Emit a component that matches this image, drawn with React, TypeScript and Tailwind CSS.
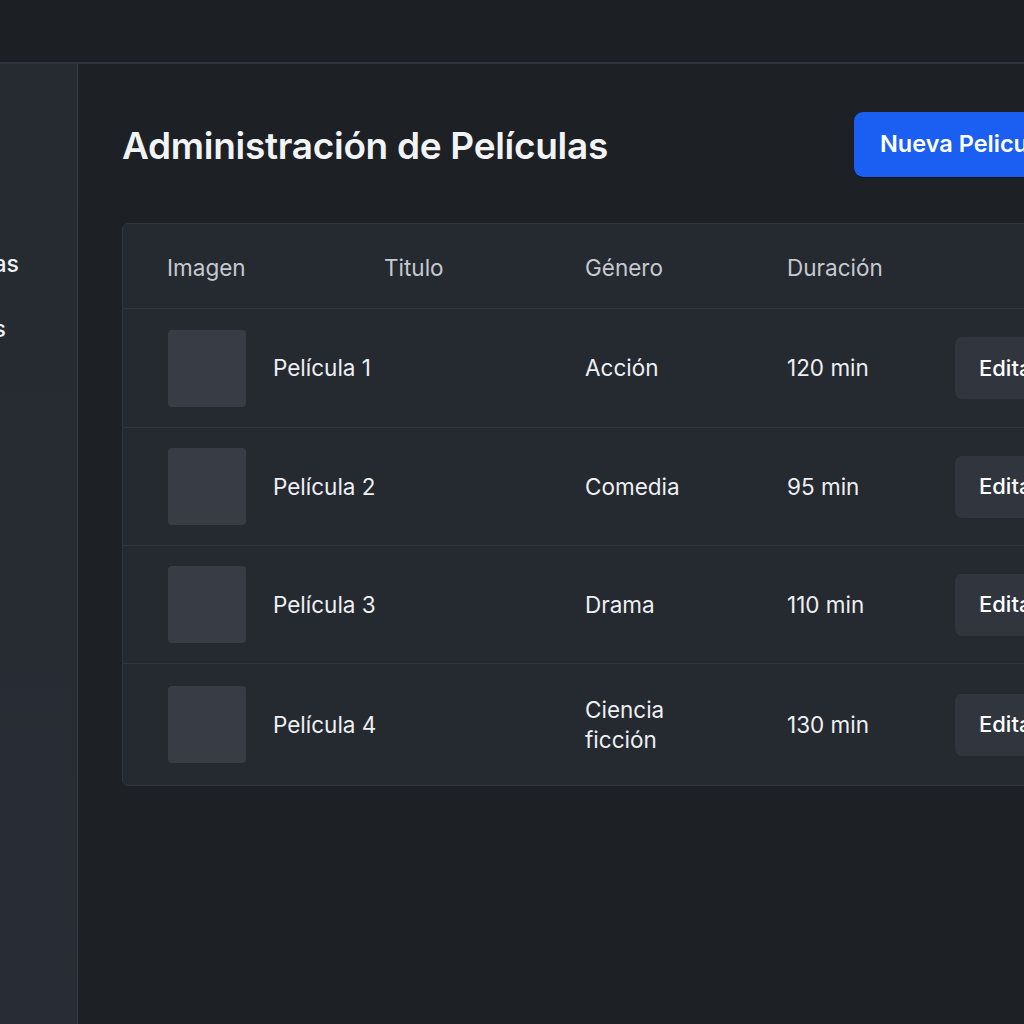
import React from "react";

const movies = [
  { title: "Película 1", genre: "Acción", duration: "120 min", h: "h-[119px]" },
  { title: "Película 2", genre: "Comedia", duration: "95 min", h: "h-[118px]" },
  { title: "Película 3", genre: "Drama", duration: "110 min", h: "h-[118px]" },
  { title: "Película 4", genre: "Ciencia ficción", duration: "130 min", h: "h-[121px]" },
];

const App = () => {
  return (
    <div
      className="w-[1024px] h-[1024px] overflow-hidden bg-[#1d2025] flex flex-col text-[#eef0f3]"
      style={{ fontFamily: "Inter, 'Noto Sans', sans-serif" }}
    >
      {/* top bar */}
      <header className="h-[64px] shrink-0 bg-[#1c1f24] border-b-2 border-[#30343c]" />

      <div className="flex flex-1 min-h-0">
        {/* sidebar, scrolled off to the left */}
        <aside className="w-[78px] shrink-0 overflow-hidden border-r border-[#353a43] bg-gradient-to-b from-[#262a31] to-[#282c34]">
          <nav className="ml-[-162px] w-[240px] pt-[188px] flex flex-col gap-[41px] text-[23px] font-medium text-right pr-[59px]">
            <span className="leading-[24px]">Películas</span>
            <span className="leading-[24px] mr-[13px]">Usuarios</span>
          </nav>
        </aside>

        <main className="flex-1 min-w-0 overflow-hidden pl-[44px] pt-[47px]">
          <div className="flex items-center justify-between w-[1000px] h-[66px]">
            <h1 className="pt-[4px] text-[37px] font-semibold text-[#f2f3f5] tracking-[-0.3px]">
              Administración de Películas
            </h1>
            <button className="mr-[30px] h-[65px] w-[238px] rounded-[9px] bg-[#1a5ef2] text-[23.5px] font-semibold text-white text-left pl-[26px] shadow-[0_1px_0_rgba(0,0,0,0.4)]">
              Nueva Pelicula
            </button>
          </div>

          <div className="mt-[46px] w-[1000px] rounded-[6px] border border-[#31353d] bg-[#252930] overflow-hidden">
            <div className="grid grid-cols-[217px_201px_202px_1fr] h-[85px] items-center pl-[44px] pt-[3px] border-b border-[#31353d] text-[22.5px] text-[#c6cad0]">
              <span>Imagen</span>
              <span>Titulo</span>
              <span>Género</span>
              <span>Duración</span>
            </div>
            {movies.map((m, i) => (
              <div
                key={m.title}
                className={
                  "grid grid-cols-[105px_312px_202px_168px_1fr] items-center pl-[45px] text-[22.5px] " +
                  m.h +
                  (i === movies.length - 1 ? "" : " border-b border-[#31353d]")
                }
              >
                <div className="w-[78px] h-[77px] rounded-[4px] bg-[#373c45]" />
                <span>{m.title}</span>
                <span className="w-[110px] leading-[30px]">{m.genre}</span>
                <span>{m.duration}</span>
                <div>
                  <button className="h-[62px] w-[120px] rounded-[7px] bg-[#30353e] text-left pl-[24px] text-[22px] font-medium text-white">
                    Editar
                  </button>
                </div>
              </div>
            ))}
          </div>
        </main>
      </div>
    </div>
  );
};

export default App;
